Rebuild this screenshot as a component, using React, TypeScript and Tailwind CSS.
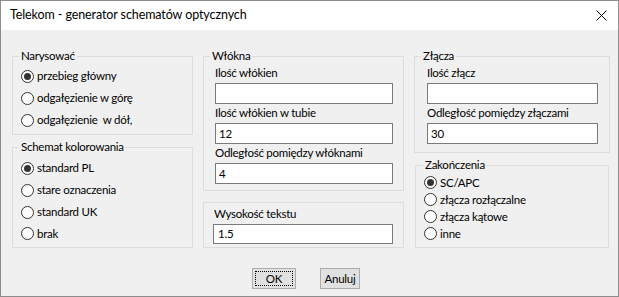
import React from 'react';

const font = { fontFamily: 'Lato, "Noto Sans", sans-serif' };

function Radio({ label, checked }: { label: string; checked?: boolean }) {
  return (
    <div className="flex items-center">
      <span className="w-[13px] h-[13px] rounded-full border border-[#333] bg-white flex items-center justify-center">
        {checked && <span className="w-[7px] h-[7px] rounded-full bg-[#333]" />}
      </span>
      <span className="ml-[3px] whitespace-pre">{label}</span>
    </div>
  );
}

function Field({ label, value }: { label: string; value?: string }) {
  return (
    <div className="flex flex-col">
      <span className="leading-[16px] h-[16px]">{label}</span>
      <div className="mt-[2px] h-[21px] border border-[#7a7a7a] bg-white pl-[3px] leading-[19px]">{value}</div>
    </div>
  );
}

export default function App() {
  return (
    <div
      className="w-[619px] h-[297px] border border-[#8c8c8c] bg-[#f0f0f0] text-[11.5px] tracking-[-0.25px] text-black overflow-hidden"
      style={font}
    >
      {/* pasek tytułu */}
      <div className="h-[29px] bg-white flex items-center justify-between pl-[9px] pr-[11px]">
        <span className="text-[12.5px] tracking-[-0.1px]">Telekom - generator schematów optycznych</span>
        <svg width="11" height="11" viewBox="0 0 11 11">
          <path d="M0.5 0.5 L10.5 10.5 M10.5 0.5 L0.5 10.5" stroke="#000" strokeWidth="1" />
        </svg>
      </div>

      <div className="pt-[18px] pl-[11px] flex flex-col">
        <div className="flex gap-[10px]">
          {/* lewa kolumna */}
          <div className="flex flex-col w-[181px]">
            <fieldset className="h-[87px] border border-[#dcdcdc] pl-[6px] m-0 p-0">
              <legend className="px-[2px] leading-[16px]">Narysować</legend>
              <div className="mt-[1px] flex flex-col pl-[2px]">
                <div className="h-[22px] flex items-center"><Radio label="przebieg główny" checked /></div>
                <div className="h-[22px] flex items-center"><Radio label="odgałęzienie w górę" /></div>
                <div className="h-[22px] flex items-center"><Radio label="odgałęzienie  w dół," /></div>
              </div>
            </fieldset>
            <fieldset className="mt-[4px] h-[109px] border border-[#dcdcdc] pl-[6px] m-0 p-0">
              <legend className="px-[2px] leading-[16px]">Schemat kolorowania</legend>
              <div className="mt-[2px] flex flex-col pl-[2px]">
                <div className="h-[22px] flex items-center"><Radio label="standard PL" checked /></div>
                <div className="h-[22px] flex items-center"><Radio label="stare oznaczenia" /></div>
                <div className="h-[22px] flex items-center"><Radio label="standard UK" /></div>
                <div className="h-[21px] flex items-center"><Radio label="brak" /></div>
              </div>
            </fieldset>
          </div>

          {/* środkowa kolumna */}
          <div className="flex flex-col w-[201px]">
            <fieldset className="h-[143px] border border-[#dcdcdc] pl-[6px] m-0 p-0">
              <legend className="px-[2px] leading-[16px]">Włókna</legend>
              <div className="mt-[1px] flex flex-col gap-[1px] pl-[5px] w-[183px]">
                <Field label="Ilość włókien" />
                <Field label="Ilość włókien w tubie" value="12" />
                <Field label="Odległość pomiędzy włóknami" value="4" />
              </div>
            </fieldset>
            <div className="mt-[11px] h-[46px] border border-[#dcdcdc] pl-[9px] pt-[3px]">
              <div className="flex flex-col w-[180px]">
                <span className="leading-[16px] h-[16px] pl-[1px]">Wysokość tekstu</span>
                <div className="mt-[2px] h-[20px] border border-[#7a7a7a] bg-white pl-[4px] leading-[18px]">1.5</div>
              </div>
            </div>
          </div>

          {/* prawa kolumna */}
          <div className="flex flex-col w-[196px]">
            <fieldset className="h-[105px] border border-[#dcdcdc] pl-[6px] m-0 p-0">
              <legend className="px-[2px] leading-[16px]">Złącza</legend>
              <div className="mt-[1px] flex flex-col gap-[1px] pl-[6px] w-[177px]">
                <Field label="Ilość złącz" />
                <Field label="Odległość pomiędzy złączami" value="30" />
              </div>
            </fieldset>
            <fieldset className="mt-[4px] ml-[1px] w-[194px] h-[91px] border border-[#dcdcdc] pl-[7px] m-0 p-0">
              <legend className="px-[2px] leading-[16px]">Zakończenia</legend>
              <div className="mt-[1px] flex flex-col pl-[1px]">
                <div className="h-[17px] flex items-center"><Radio label="SC/APC" checked /></div>
                <div className="h-[17px] flex items-center"><Radio label="złącza rozłączalne" /></div>
                <div className="h-[17px] flex items-center"><Radio label="złącza kątowe" /></div>
                <div className="h-[17px] flex items-center"><Radio label="inne" /></div>
              </div>
            </fieldset>
          </div>
        </div>

        {/* przyciski */}
        <div className="mt-[20px] flex pl-[240px] gap-[24px]">
          <button className="w-[44px] h-[21px] bg-[#e1e1e1] border border-[#adadad] p-[2px] flex">
            <span className="flex-1 border border-dotted border-black flex items-center justify-center leading-none">OK</span>
          </button>
          <button className="w-[40px] h-[21px] bg-[#e1e1e1] border border-[#adadad] flex items-center justify-center leading-none">
            Anuluj
          </button>
        </div>
      </div>
    </div>
  );
}
